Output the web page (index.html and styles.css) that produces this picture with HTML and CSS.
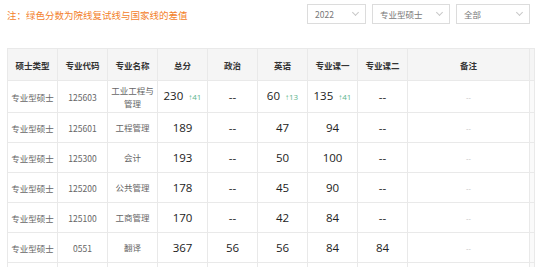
FILE: index.html
```html
<!DOCTYPE html>
<html lang="zh">
<head>
<meta charset="utf-8">
<link rel="stylesheet" href="styles.css">
</head>
<body>
<div class="page">
  <div class="topbar">
    <div class="note">注：绿色分数为院线复试线与国家线的差值</div>
    <div class="filters">
      <div class="sel w1"><span>2022</span><i class="chev"></i></div>
      <div class="sel w2"><span>专业型硕士</span><i class="chev"></i></div>
      <div class="sel w3"><span>全部</span><i class="chev"></i></div>
    </div>
  </div>
  <table class="grid">
    <colgroup>
      <col class="c"><col class="c"><col class="c"><col class="c"><col class="c"><col class="c"><col class="c"><col class="c"><col class="rm"><col class="gut">
    </colgroup>
    <thead>
      <tr><th>硕士类型</th><th>专业代码</th><th>专业名称</th><th>总分</th><th>政治</th><th>英语</th><th>专业课一</th><th>专业课二</th><th>备注</th><th class="g"></th></tr>
    </thead>
    <tbody>
      <tr class="tall"><td>专业型硕士</td><td>125603</td><td class="nm">工业工程与<br>管理</td><td class="n">230<em>↑41</em></td><td class="n">--</td><td class="n">60<em>↑13</em></td><td class="n">135<em>↑41</em></td><td class="n">--</td><td class="rk">--</td><td class="g"></td></tr>
      <tr><td>专业型硕士</td><td>125601</td><td class="nm">工程管理</td><td class="n">189</td><td class="n">--</td><td class="n">47</td><td class="n">94</td><td class="n">--</td><td class="rk">--</td><td class="g"></td></tr>
      <tr><td>专业型硕士</td><td>125300</td><td class="nm">会计</td><td class="n">193</td><td class="n">--</td><td class="n">50</td><td class="n">100</td><td class="n">--</td><td class="rk">--</td><td class="g"></td></tr>
      <tr><td>专业型硕士</td><td>125200</td><td class="nm">公共管理</td><td class="n">178</td><td class="n">--</td><td class="n">45</td><td class="n">90</td><td class="n">--</td><td class="rk">--</td><td class="g"></td></tr>
      <tr><td>专业型硕士</td><td>125100</td><td class="nm">工商管理</td><td class="n">170</td><td class="n">--</td><td class="n">42</td><td class="n">84</td><td class="n">--</td><td class="rk">--</td><td class="g"></td></tr>
      <tr><td>专业型硕士</td><td>0551</td><td class="nm">翻译</td><td class="n">367</td><td class="n">56</td><td class="n">56</td><td class="n">84</td><td class="n">84</td><td class="rk">--</td><td class="g"></td></tr>
      <tr><td></td><td></td><td></td><td></td><td></td><td></td><td></td><td></td><td></td><td class="g"></td></tr>
    </tbody>
  </table>
</div>
</body>
</html>
```

FILE: styles.css
```css
html, body {
  margin: 0;
  padding: 0;
  background: #fff;
  overflow: hidden;
}
body {
  font-family: "Microsoft YaHei", "Noto Sans CJK SC", "Noto Sans", sans-serif;
  color: #555;
}
.page {
  padding: 0 5px 0 7px;
}
.topbar {
  display: flex;
  align-items: center;
  justify-content: space-between;
  height: 30px;
  padding-top: 0;
  margin-bottom: 18px;
  padding-right: 4px;
}
.note {
  font-size: 9.5px;
  line-height: 14px;
  color: #f3812b;
  margin-top: 0;
}
.filters {
  display: flex;
  gap: 6px;
  margin-top: -2px;
}
.sel {
  box-sizing: border-box;
  height: 20px;
  border: 1px solid #dcdcdc;
  display: flex;
  align-items: center;
  justify-content: space-between;
  padding: 0 7px 0 7px;
  font-size: 8.5px;
  color: #777;
}
.w1 { width: 59px; }
.w2 { width: 78px; }
.w3 { width: 74px; }
.chev {
  width: 4px;
  height: 4px;
  border-right: 1px solid #c8c8c8;
  border-bottom: 1px solid #c8c8c8;
  transform: rotate(45deg);
  margin-top: -3px;
}
.grid {
  border-collapse: collapse;
  table-layout: fixed;
  width: 527px;
}
col.c { width: 50px; }
col.rm { width: 122px; }
col.gut { width: 5px; }
th, td {
  border: 1px solid #e9e9e9;
  text-align: center;
  padding: 0;
  font-size: 8.5px;
  line-height: 12px;
}
th {
  background: #f5f5f5;
  height: 31px;
  font-weight: bold;
  color: #333;
}
td {
  height: 29px;
  color: #666;
}
tr.tall td { height: 31px; }
td.nm { line-height: 13px; }
td.n {
  font-size: 11.5px;
  color: #222;
  font-family: "Microsoft YaHei", "Open Sans", "Noto Sans", sans-serif;
}
td.n em {
  font-style: normal;
  font-size: 8px;
  color: #5cb58e;
  margin-left: 5px;
}
td.rk {
  color: #bbb;
  font-size: 7px;
}
.g {
  background: #fafafa;
}
th.g { background: #f5f5f5; }
```
